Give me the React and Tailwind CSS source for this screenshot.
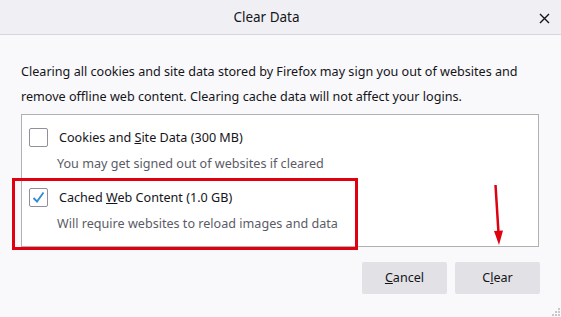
import React from "react";

const font = { fontFamily: '"Noto Sans", "Open Sans", sans-serif' };

function Check({ checked }) {
  return (
    <div className="w-[19px] h-[19px] shrink-0 border border-[#8f8f9d] rounded-[2px] bg-white flex items-center justify-center">
      {checked && (
        <svg width="13" height="13" viewBox="0 0 13 13">
          <path d="M1.5 7 L5 10.5 L11.5 1.5" fill="none" stroke="#2f8bd6" strokeWidth="1.8" />
        </svg>
      )}
    </div>
  );
}

function Row({ checked, title, sub }) {
  return (
    <div className="flex flex-col">
      <div className="flex items-center gap-[11px] h-[19px]">
        <Check checked={checked} />
        <span className="text-[12.6px] text-[#15141a] leading-none pt-[2px]">{title}</span>
      </div>
      <div className="pl-[28px] mt-[8px] text-[12.6px] text-[#5b5b66] leading-[18px]">{sub}</div>
    </div>
  );
}

export default function App() {
  return (
    <div className="w-[561px] h-[317px] bg-[#f9f9fb] flex flex-col relative overflow-hidden" style={font}>
      <div className="h-[35px] shrink-0 bg-[#f0f0f4] border-b border-[#d7d7db] flex items-center justify-center relative pr-[28px]">
        <span className="text-[13.5px] text-[#15141a]">Clear Data</span>
        <svg className="absolute right-[11px] top-[13px]" width="11" height="11" viewBox="0 0 11 11">
          <path d="M1 1 L10 10 M10 1 L1 10" stroke="#15141a" strokeWidth="1.4" />
        </svg>
      </div>
      <div className="px-[21px] flex flex-col">
        <p className="mt-[24px] text-[12.6px] leading-[25px] text-[#15141a] whitespace-nowrap">
          Clearing all cookies and site data stored by Firefox may sign you out of websites and
          <br />
          remove offline web content. Clearing cache data will not affect your logins.
        </p>
        <div className="mt-[5px] h-[133px] w-[518px] bg-white border border-[#b1b1b3] pt-[13px] pl-[7px] flex flex-col gap-[15px]">
          <Row
            checked={false}
            title={<>Cookies and <u>S</u>ite Data (300 MB)</>}
            sub="You may get signed out of websites if cleared"
          />
          <Row
            checked={true}
            title={<>Cached <u>W</u>eb Content (1.0 GB)</>}
            sub="Will require websites to reload images and data"
          />
        </div>
        <div className="mt-[15px] flex justify-end gap-[8px]">
          <button className="w-[85px] h-[32px] bg-[#e1e1e6] rounded-[2px] text-[12.6px] text-[#15141a]">
            <u>C</u>ancel
          </button>
          <button className="w-[85px] h-[32px] bg-[#e1e1e6] rounded-[2px] text-[12.6px] text-[#15141a]">
            C<u>l</u>ear
          </button>
        </div>
      </div>

      {/* annotation: red rectangle */}
      <div className="absolute left-[12px] top-[178px] w-[346px] h-[72px] border-[3px] border-[#e0000f]" />
      {/* annotation: red arrow */}
      <svg className="absolute left-[488px] top-[183px]" width="20" height="66" viewBox="0 0 20 66">
        <path d="M7.5 2 L10.5 50" stroke="#e0000f" strokeWidth="2.5" />
        <path d="M6 48 L15 47.5 L11 62 Z" fill="#e0000f" />
      </svg>
      {/* resize grip */}
      <svg className="absolute right-0 bottom-0" width="10" height="10" viewBox="0 0 10 10">
        <g fill="#c8c8cc">
          <rect x="7" y="1" width="2" height="2" />
          <rect x="4" y="4" width="2" height="2" />
          <rect x="7" y="4" width="2" height="2" />
          <rect x="1" y="7" width="2" height="2" />
          <rect x="4" y="7" width="2" height="2" />
          <rect x="7" y="7" width="2" height="2" />
        </g>
      </svg>
    </div>
  );
}
